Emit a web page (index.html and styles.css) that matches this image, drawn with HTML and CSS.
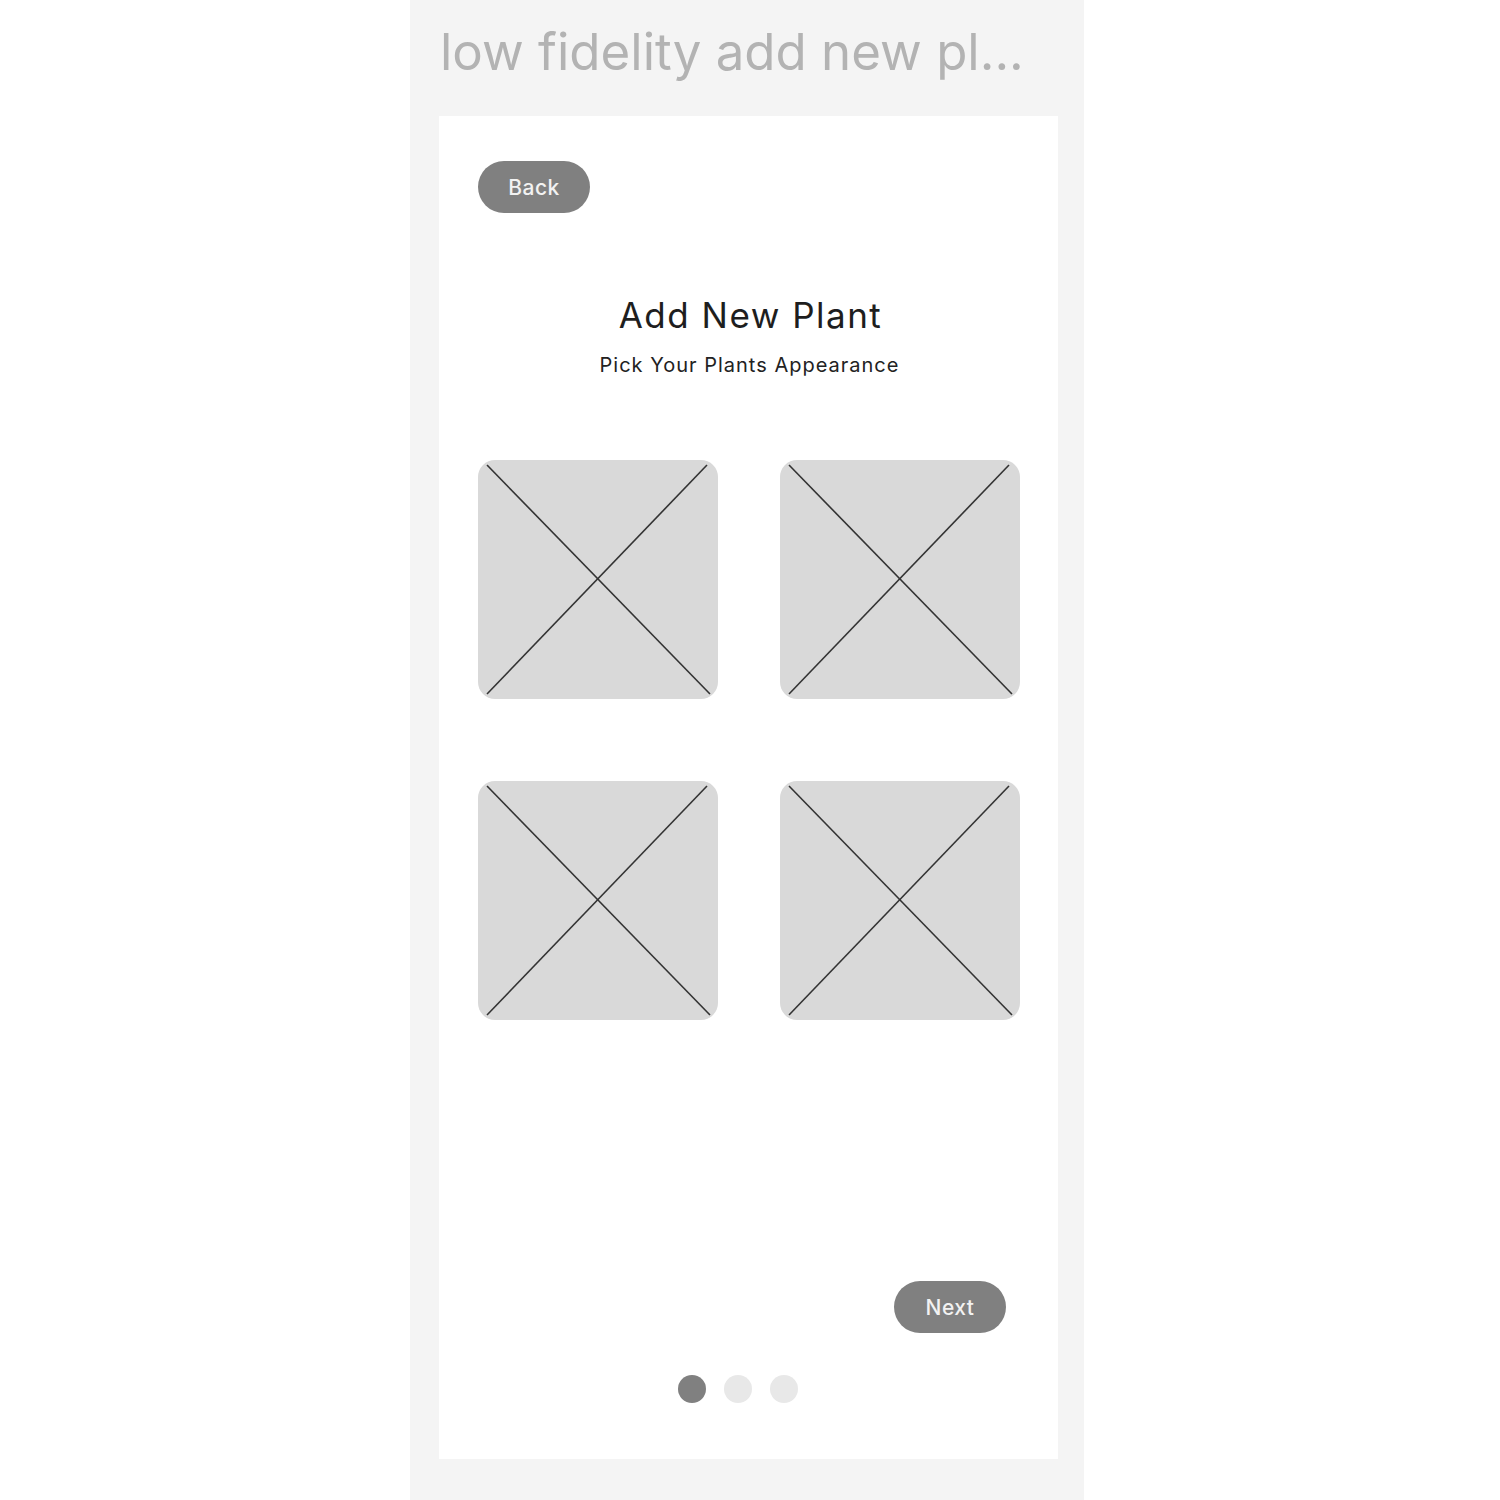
FILE: index.html
```html
<!DOCTYPE html>
<html>
<head>
<meta charset="utf-8">
<link rel="stylesheet" href="styles.css">
</head>
<body>
<div class="frame">
  <div class="frame-title">low fidelity add new pl...</div>
  <div class="card">
    <div class="top-row"><button class="pill">Back</button></div>
    <div class="heading">
      <h1>Add New Plant</h1>
      <p>Pick Your Plants Appearance</p>
    </div>
    <div class="grid">
      <div class="tile"><svg viewBox="0 0 240 238" preserveAspectRatio="none"><line x1="9" y1="5" x2="232" y2="233"/><line x1="229" y1="5" x2="9" y2="233"/></svg></div>
      <div class="tile"><svg viewBox="0 0 240 238" preserveAspectRatio="none"><line x1="9" y1="5" x2="232" y2="233"/><line x1="229" y1="5" x2="9" y2="233"/></svg></div>
      <div class="tile"><svg viewBox="0 0 240 238" preserveAspectRatio="none"><line x1="9" y1="5" x2="232" y2="233"/><line x1="229" y1="5" x2="9" y2="233"/></svg></div>
      <div class="tile"><svg viewBox="0 0 240 238" preserveAspectRatio="none"><line x1="9" y1="5" x2="232" y2="233"/><line x1="229" y1="5" x2="9" y2="233"/></svg></div>
    </div>
    <div class="spacer"></div>
    <div class="bottom-row"><button class="pill">Next</button></div>
    <div class="dots"><span class="dot on"></span><span class="dot"></span><span class="dot"></span></div>
  </div>
</div>
</body>
</html>
```
FILE: styles.css
```css
html, body { margin: 0; padding: 0; background: #ffffff; }
body { width: 1500px; height: 1500px; overflow: hidden; }
.frame {
  margin-left: 410px;
  width: 674px;
  height: 1500px;
  background: #f4f4f4;
  box-sizing: border-box;
  padding: 0 26px 0 29px;
  display: flex;
  flex-direction: column;
}
.frame-title {
  font-family: Inter, "Noto Sans", sans-serif;
  font-size: 51px;
  color: #b3b3b3;
  height: 116px;
  line-height: 104px;
  white-space: nowrap;
  padding-left: 1px;
}
.card {
  background: #ffffff;
  width: 619px;
  height: 1343px;
  box-sizing: border-box;
  padding: 45px 39px 0 39px;
  display: flex;
  flex-direction: column;
  font-family: Inter, "Noto Sans", sans-serif;
}
.top-row { display: flex; }
.pill {
  height: 52px;
  width: 112px;
  border: none;
  border-radius: 26px;
  background: #808080;
  color: #f2f2f2;
  font-family: Inter, "Noto Sans", sans-serif;
  font-size: 21px;
  font-weight: 500;
  letter-spacing: 0.5px;
  padding: 0;
}
.heading { text-align: center; margin-top: 80px; }
.heading h1 {
  margin: 0;
  font-weight: 400;
  font-size: 35px;
  letter-spacing: 1.5px;
  line-height: 44px;
  color: #1e1e1e;
  padding-left: 4px;
}
.heading p {
  margin: 16px 0 0 0;
  font-size: 20px;
  letter-spacing: 1px;
  line-height: 24px;
  color: #222;
  padding-left: 2px;
}
.grid {
  margin-top: 83px;
  display: grid;
  grid-template-columns: 240px 240px;
  column-gap: 62px;
  row-gap: 82px;
}
.tile {
  width: 240px;
  height: 239px;
  background: #d9d9d9;
  border-radius: 17px;
  overflow: hidden;
}
.tile svg { display: block; width: 100%; height: 100%; }
.tile line { stroke: #333; stroke-width: 1.6; }
.spacer { height: 261px; }
.bottom-row { display: flex; justify-content: flex-end; padding-right: 13px; }
.dots {
  margin-top: 42px;
  display: flex;
  justify-content: center;
  gap: 18px;
  padding-right: 21px;
}
.dot { width: 28px; height: 28px; border-radius: 50%; background: #e8e8e8; }
.dot.on { background: #808080; }
```
